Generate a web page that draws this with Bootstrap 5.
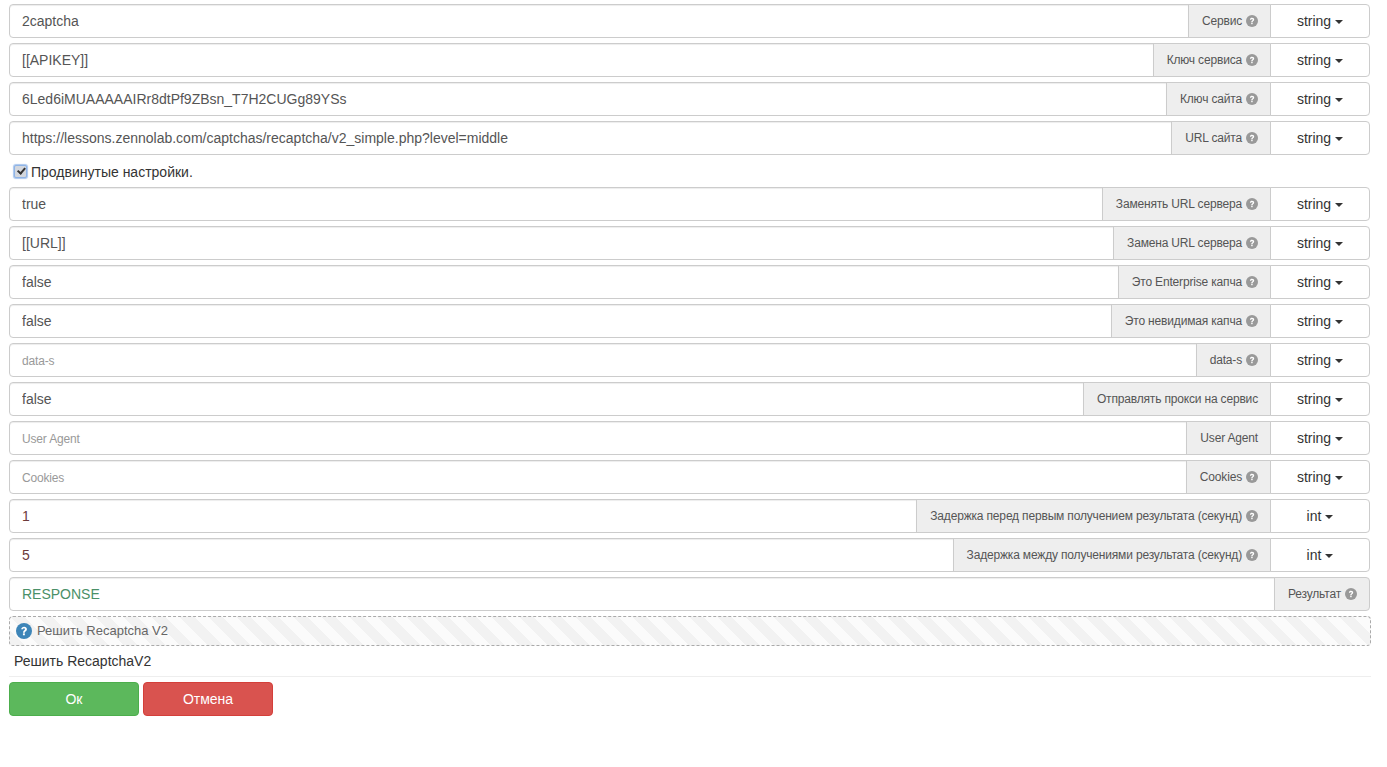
<!DOCTYPE html>
<html lang="ru">
<head>
<meta charset="utf-8">
<title>Решить Recaptcha V2</title>
<link rel="stylesheet" href="https://cdn.jsdelivr.net/npm/bootstrap@5.3.0/dist/css/bootstrap.min.css">
<style>
html,body{background:#fff}
body{font-family:"Liberation Sans",Arial,sans-serif;font-size:14px;line-height:20px;color:#333}
.shell{padding:4px 17px 0 9px}
.fld{margin-bottom:5px;height:34px;flex-wrap:nowrap}
.fld.widerow{margin-right:-1px}
.fld .form-control{height:34px;font-size:14px;line-height:20px;padding:6px 12px;color:#555;border-color:#ccc;border-radius:4px;box-shadow:inset 0 1px 1px rgba(0,0,0,.075);font-family:inherit}
.fld .form-control::placeholder{color:#999;font-size:12px;letter-spacing:-.17px}
.fld .form-control.val-int{color:#6d3a3a}
.fld .form-control.val-out{color:#4a9068}
.fld .input-group-text{font-size:12px;letter-spacing:-.17px;line-height:20px;padding:6px 12px 6px 13px;color:#555;background:#eee;border-color:#ccc;gap:3px;border-radius:0}
.fld .input-group-text.endcap{border-radius:0 4px 4px 0}
.fld .typebtn{width:100px;flex:none;font-size:14px;line-height:20px;padding:6px 12px;color:#333;background:#fff;border:1px solid #ccc;border-radius:0 4px 4px 0;font-family:inherit}
.typebtn.dropdown-toggle::after{border-top:4px solid;border-right:4px solid transparent;border-left:4px solid transparent;border-bottom:0;margin-left:4px;vertical-align:2px}
.qmark{width:12px;height:12px;flex:none;margin-left:1px;color:#999}
.adv{height:20px;margin:7px 0 5px 5px;gap:4px;color:#333}
.adv input{appearance:none;-webkit-appearance:none;width:13px;height:13px;margin:-2px 0 0;border:1px solid #8fb4e6;border-radius:2px;background:#d3d7de;position:relative;box-shadow:0 0 1px 1px #a9c6ee;flex:none}
.adv input::after{content:"";position:absolute;left:3.5px;top:0;width:4.5px;height:8px;border:solid #333;border-width:0 2px 2px 0;transform:rotate(40deg)}
.panelbar{height:30px;margin:0 -1px 0 0;border:1px dashed #aaa;border-radius:4px;padding:0 6px;gap:5px;color:#666;font-size:13px;background:repeating-linear-gradient(45deg,#f2f2f2 0 10px,#fbfbfb 10px 20px)}
.helpdot{width:16px;height:16px;flex:none;color:#3d85b8}
.descr{padding:5px 5px 0;height:29px;color:#333;font-size:14px}
.rule{border:0;border-top:1px solid #eee;opacity:1;margin:1px -1px 5px 0}
.act{width:130px;height:34px;font-size:14px;line-height:20px;padding:6px 12px;color:#fff;border-radius:4px;font-family:inherit}
.act-ok{background:#5cb85c;border:1px solid #4cae4c}
.act-no{background:#d9534f;border:1px solid #d43f3a}
</style>
</head>
<body>
<svg width="0" height="0" class="d-block position-absolute">
<symbol id="q" viewBox="0 0 24 24"><circle cx="12" cy="12" r="12" fill="currentColor"/><path d="M7.800 9.300C8 6.900 9.800 5.600 12.200 5.600c2.400 0 4.200 1.500 4.200 3.600 0 3-3.200 3-3.200 5.300H10.400c0-3.400 3-3.500 3-5.200 0-.8-.6-1.300-1.400-1.300-.9 0-1.400.6-1.500 1.500z" fill="#fff"/><rect x="10.400" y="15.500" width="2.900" height="2.900" fill="#fff"/></symbol>
</svg>
<main class="shell">
  <div class="input-group fld"><input class="form-control" value="2captcha"><span class="input-group-text">Сервис <svg class="qmark"><use href="#q"/></svg></span><button class="btn typebtn dropdown-toggle" type="button">string</button></div>
  <div class="input-group fld"><input class="form-control" value="[[APIKEY]]"><span class="input-group-text">Ключ сервиса <svg class="qmark"><use href="#q"/></svg></span><button class="btn typebtn dropdown-toggle" type="button">string</button></div>
  <div class="input-group fld"><input class="form-control" value="6Led6iMUAAAAAIRr8dtPf9ZBsn_T7H2CUGg89YSs"><span class="input-group-text">Ключ сайта <svg class="qmark"><use href="#q"/></svg></span><button class="btn typebtn dropdown-toggle" type="button">string</button></div>
  <div class="input-group fld"><input class="form-control" value="https://lessons.zennolab.com/captchas/recaptcha/v2_simple.php?level=middle"><span class="input-group-text">URL сайта <svg class="qmark"><use href="#q"/></svg></span><button class="btn typebtn dropdown-toggle" type="button">string</button></div>
  <label class="adv d-flex align-items-center"><input type="checkbox" checked> Продвинутые настройки.</label>
  <div class="input-group fld"><input class="form-control" value="true"><span class="input-group-text">Заменять URL сервера <svg class="qmark"><use href="#q"/></svg></span><button class="btn typebtn dropdown-toggle" type="button">string</button></div>
  <div class="input-group fld"><input class="form-control" value="[[URL]]"><span class="input-group-text">Замена URL сервера <svg class="qmark"><use href="#q"/></svg></span><button class="btn typebtn dropdown-toggle" type="button">string</button></div>
  <div class="input-group fld"><input class="form-control" value="false"><span class="input-group-text">Это Enterprise капча <svg class="qmark"><use href="#q"/></svg></span><button class="btn typebtn dropdown-toggle" type="button">string</button></div>
  <div class="input-group fld"><input class="form-control" value="false"><span class="input-group-text">Это невидимая капча <svg class="qmark"><use href="#q"/></svg></span><button class="btn typebtn dropdown-toggle" type="button">string</button></div>
  <div class="input-group fld"><input class="form-control" placeholder="data-s"><span class="input-group-text">data-s <svg class="qmark"><use href="#q"/></svg></span><button class="btn typebtn dropdown-toggle" type="button">string</button></div>
  <div class="input-group fld"><input class="form-control" value="false"><span class="input-group-text">Отправлять прокси на сервис</span><button class="btn typebtn dropdown-toggle" type="button">string</button></div>
  <div class="input-group fld"><input class="form-control" placeholder="User Agent"><span class="input-group-text">User Agent</span><button class="btn typebtn dropdown-toggle" type="button">string</button></div>
  <div class="input-group fld"><input class="form-control" placeholder="Cookies"><span class="input-group-text">Cookies <svg class="qmark"><use href="#q"/></svg></span><button class="btn typebtn dropdown-toggle" type="button">string</button></div>
  <div class="input-group fld"><input class="form-control val-int" value="1"><span class="input-group-text">Задержка перед первым получением результата (секунд) <svg class="qmark"><use href="#q"/></svg></span><button class="btn typebtn dropdown-toggle" type="button">int</button></div>
  <div class="input-group fld"><input class="form-control val-int" value="5"><span class="input-group-text">Задержка между получениями результата (секунд) <svg class="qmark"><use href="#q"/></svg></span><button class="btn typebtn dropdown-toggle" type="button">int</button></div>
  <div class="input-group fld widerow"><input class="form-control val-out" value="RESPONSE"><span class="input-group-text endcap">Результат <svg class="qmark"><use href="#q"/></svg></span></div>
  <div class="panelbar d-flex align-items-center"><svg class="helpdot"><use href="#q"/></svg> Решить Recaptcha V2</div>
  <div class="descr">Решить RecaptchaV2</div>
  <hr class="rule">
  <div class="d-flex gap-1"><button class="btn act act-ok" type="button">Ок</button><button class="btn act act-no" type="button">Отмена</button></div>
</main>
<script src="https://cdn.jsdelivr.net/npm/bootstrap@5.3.0/dist/js/bootstrap.bundle.min.js"></script>
</body>
</html>
